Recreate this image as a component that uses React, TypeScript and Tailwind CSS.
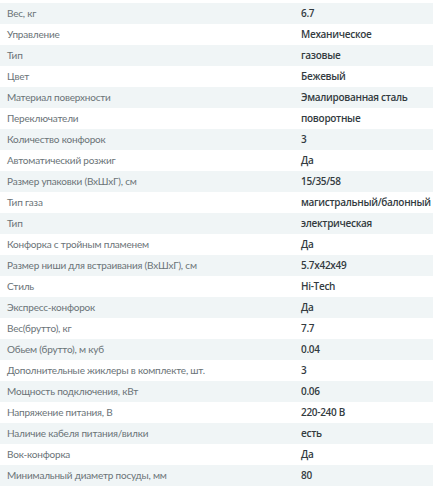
import React from "react";

const rows: [string, string][] = [
  ["Вес, кг", "6.7"],
  ["Управление", "Механическое"],
  ["Тип", "газовые"],
  ["Цвет", "Бежевый"],
  ["Материал поверхности", "Эмалированная сталь"],
  ["Переключатели", "поворотные"],
  ["Количество конфорок", "3"],
  ["Автоматический розжиг", "Да"],
  ["Размер упаковки (ВхШхГ), см", "15/35/58"],
  ["Тип газа", "магистральный/балонный"],
  ["Тип", "электрическая"],
  ["Конфорка с тройным пламенем", "Да"],
  ["Размер ниши для встраивания (ВхШхГ), см", "5.7x42x49"],
  ["Стиль", "Hi-Tech"],
  ["Экспресс-конфорок", "Да"],
  ["Вес(брутто), кг", "7.7"],
  ["Обьем (брутто), м куб", "0.04"],
  ["Дополнительные жиклеры в комплекте, шт.", "3"],
  ["Мощность подключения, кВт", "0.06"],
  ["Напряжение питания, В", "220-240 В"],
  ["Наличие кабеля питания/вилки", "есть"],
  ["Вок-конфорка", "Да"],
  ["Минимальный диаметр посуды, мм", "80"],
];

export default function App() {
  return (
    <div className="w-[433px] h-[499px] bg-white pt-[3px]">
      {rows.map(([k, v], i) => (
        <div
          key={i}
          className={`flex h-[21px] items-center ${i % 2 === 0 ? "bg-[#f0f5f6]" : "bg-white"}`}
        >
          <div className="w-[301px] shrink-0 pl-[7px] text-[10px] tracking-[-0.2px] text-[#6a7377] whitespace-nowrap font-['Lato','Noto_Sans',sans-serif]">
            {k}
          </div>
          <div className="flex-1 whitespace-nowrap text-[10px] tracking-[-0.3px] font-semibold text-[#333b3f] font-['Open_Sans',sans-serif]">
            {v}
          </div>
        </div>
      ))}
    </div>
  );
}
